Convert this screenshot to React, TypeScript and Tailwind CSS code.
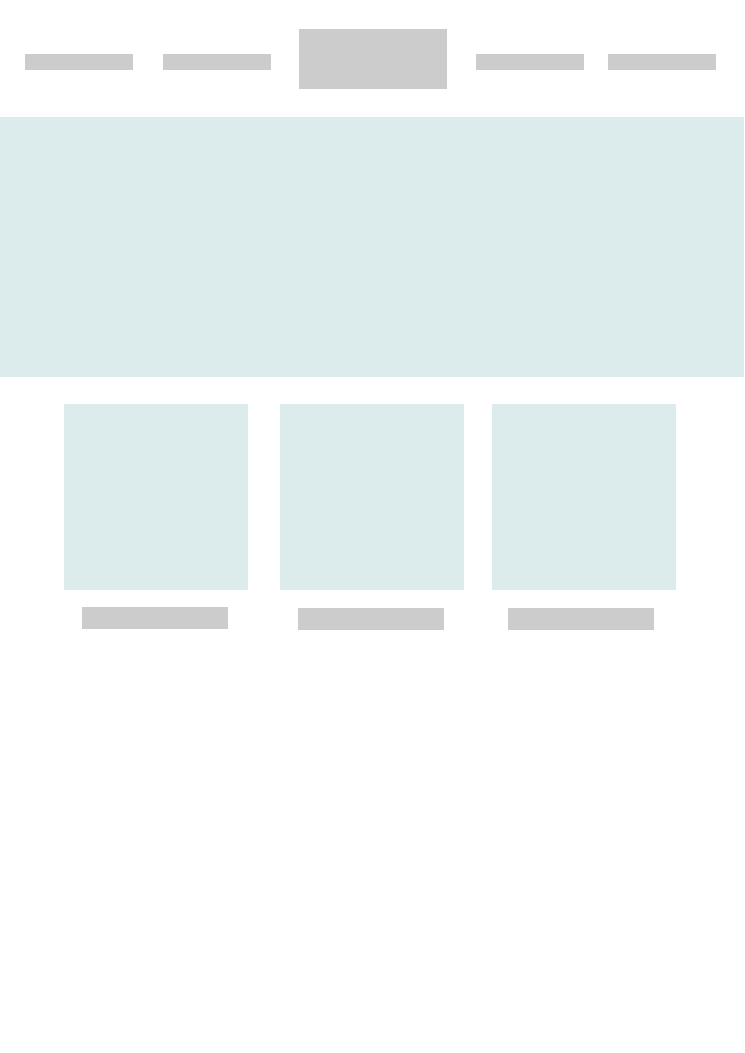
// Wireframe landing page: nav, hero, three cards

const navLeft = ['a', 'b'];
const navRight = ['c', 'd'];

const cards = [
  { id: 1, mr: 'mr-[32px]', label: 'ml-[18px] mt-[17px]' },
  { id: 2, mr: 'mr-[28px]', label: 'ml-[18px] mt-[18px]' },
  { id: 3, mr: 'mr-0', label: 'ml-[16px] mt-[18px]' },
];

export default function App() {
  return (
    <div className="w-[745px] min-h-[1053px] bg-white">
      {/* Header */}
      <header className="flex items-start pt-[29px] pl-[25px]">
        <div className="flex gap-[30px] mt-[25px]">
          {navLeft.map((k) => (
            <div key={k} className="w-[108px] h-[16px] bg-[#cccccc]" />
          ))}
        </div>
        <div className="ml-[28px] w-[148px] h-[60px] bg-[#cccccc]" />
        <div className="flex gap-[24px] mt-[25px] ml-[29px]">
          {navRight.map((k) => (
            <div key={k} className="w-[108px] h-[16px] bg-[#cccccc]" />
          ))}
        </div>
      </header>

      {/* Hero */}
      <section className="mt-[28px] w-[744px] h-[260px] bg-[#dcecec]" />

      {/* Cards */}
      <section className="flex pl-[64px] pt-[27px]">
        {cards.map((c) => (
          <div key={c.id} className={`flex flex-col ${c.mr}`}>
            <div className="w-[184px] h-[186px] bg-[#dcecec]" />
            <div className={`${c.label} w-[146px] h-[22px] bg-[#cccccc]`} />
          </div>
        ))}
      </section>
    </div>
  );
}
